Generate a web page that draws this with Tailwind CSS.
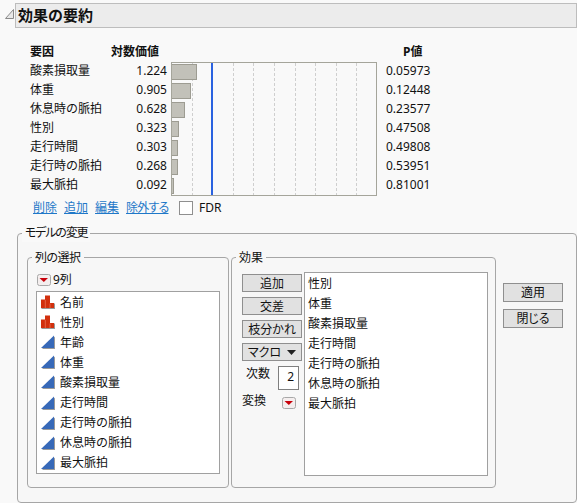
<!DOCTYPE html>
<html lang="ja">
<head>
<meta charset="utf-8">
<script src="https://cdn.jsdelivr.net/npm/@tailwindcss/browser@4"></script>
</head>
<body class="m-0">
<div class="w-[577px] h-[503px] overflow-hidden bg-[#f9f9f9] text-[#111] text-[12px] leading-[19px] font-['Noto_Sans','Noto_Sans_CJK_JP',sans-serif]">

  <!-- Title -->
  <div class="flex items-start pt-[3px] h-[42px]">
    <svg class="mt-[6px] ml-[5px] mr-[1px]" width="9" height="10" viewBox="0 0 9 10"><path d="M0.5 9.5H8.5V0.5Z" fill="#e8e8e8" stroke="#8a8a8a"/></svg>
    <div class="w-[562px] h-[25px] bg-[#ececec] border border-[#bdbdbd] pl-[2px] text-[15px] leading-[22px] font-bold">効果の要約</div>
  </div>

  <!-- Table -->
  <div class="flex">
    <div class="w-[136px] pl-[30px]">
      <div class="h-[19px] font-bold">要因</div>
      <div class="h-[19px]">酸素損取量</div>
      <div class="h-[19px]">体重</div>
      <div class="h-[19px]">休息時の脈拍</div>
      <div class="h-[19px]">性別</div>
      <div class="h-[19px]">走行時間</div>
      <div class="h-[19px]">走行時の脈拍</div>
      <div class="h-[19px]">最大脈拍</div>
    </div>
    <div class="w-[31px] flex flex-col items-end">
      <div class="h-[19px] font-bold whitespace-nowrap -mr-[-8px]">対数価値</div>
      <div class="h-[19px]">1.224</div>
      <div class="h-[19px]">0.905</div>
      <div class="h-[19px]">0.628</div>
      <div class="h-[19px]">0.323</div>
      <div class="h-[19px]">0.303</div>
      <div class="h-[19px]">0.268</div>
      <div class="h-[19px]">0.092</div>
    </div>
    <div class="ml-[4px] mt-[20px]">
      <svg class="block" width="206" height="134" viewBox="0 0 206 134">
        <g stroke="#cfcfcf" stroke-dasharray="3 2">
          <line x1="21.5" y1="1" x2="21.5" y2="133"/><line x1="62.5" y1="1" x2="62.5" y2="133"/><line x1="82.5" y1="1" x2="82.5" y2="133"/><line x1="103.5" y1="1" x2="103.5" y2="133"/><line x1="124.5" y1="1" x2="124.5" y2="133"/><line x1="144.5" y1="1" x2="144.5" y2="133"/><line x1="165.5" y1="1" x2="165.5" y2="133"/><line x1="185.5" y1="1" x2="185.5" y2="133"/>
        </g>
        <g fill="#c2c1b9" stroke="#9d9c92">
          <rect x="0.5" y="2.5" width="25" height="15"/><rect x="0.5" y="21.5" width="19" height="15"/><rect x="0.5" y="40.5" width="13" height="15"/><rect x="0.5" y="59.5" width="7" height="15"/><rect x="0.5" y="78.5" width="6" height="15"/><rect x="0.5" y="97.5" width="6" height="15"/><rect x="0.5" y="116.5" width="2" height="15"/>
        </g>
        <rect x="40" y="1" width="2" height="132" fill="#2a62e0"/>
        <rect x="0.5" y="0.5" width="205" height="133" fill="none" stroke="#a5a59b"/>
      </svg>
    </div>
    <div class="ml-[9px]">
      <div class="h-[19px] font-bold pl-[17px]">P値</div>
      <div class="h-[19px]">0.05973</div>
      <div class="h-[19px]">0.12448</div>
      <div class="h-[19px]">0.23577</div>
      <div class="h-[19px]">0.47508</div>
      <div class="h-[19px]">0.49808</div>
      <div class="h-[19px]">0.53951</div>
      <div class="h-[19px]">0.81001</div>
    </div>
  </div>

  <!-- Links -->
  <div class="flex items-center h-[19px] mt-[2px] pl-[33px]">
    <a class="text-[#1f78c8] underline">削除</a>
    <a class="text-[#1f78c8] underline ml-[7px]">追加</a>
    <a class="text-[#1f78c8] underline ml-[7px]">編集</a>
    <a class="text-[#1f78c8] underline ml-[7px] w-[42px] whitespace-nowrap tracking-[-0.8px] [font-feature-settings:'palt']">除外する</a>
    <span class="w-[14px] h-[14px] bg-white border border-[#8f8f8f] ml-[11px]"></span>
    <span class="ml-[6px]">FDR</span>
  </div>

  <!-- Model group -->
  <div class="relative ml-[17px] mt-[16px] w-[560px] h-[270px] border border-[#a6a6a6] rounded-[4px] bg-[#f7f7f7] pl-[9px] pt-[23px] flex items-start">
    <span class="absolute left-[4px] -top-[11px] px-[3px] bg-[#f9f9f9] text-[12px] tracking-[-1.2px] [font-feature-settings:'palt']">モデルの変更</span>

    <!-- Column selection -->
    <div class="relative w-[202px] h-[231px] border border-[#a6a6a6] rounded-[4px] pl-[8px]">
      <span class="absolute left-[4px] -top-[10px] px-[3px] bg-[#f7f7f7] tracking-[-0.5px] [font-feature-settings:'palt']">列の選択</span>
      <div class="flex items-center h-[19px] mt-[12px] ml-[1px]">
        <svg width="14" height="12" viewBox="0 0 14 12"><rect x="0.5" y="0.5" width="13" height="11" rx="2" fill="#f4eeee" stroke="#a8a8a8"/><path d="M2.5 4H11L6.8 8Z" fill="#c8000a"/></svg>
        <span class="ml-[2px]">9列</span>
      </div>
      <div class="w-[184px] h-[183px] mt-[2px] bg-white border border-[#a0a0a0] pl-[4px]">
        <div class="flex items-center h-[20.1px]"><svg class="shrink-0" width="14" height="14" viewBox="0 0 14 14"><path d="M0 4.500H4V0.500H9V8H13V13H0Z" fill="#d2300e"/><path d="M4.300 5V13M9 8.500V13" stroke="#ee8a70" stroke-width="0.6"/><path d="M13 8.500H14V14H0.500V13H13Z" fill="#9a9a9a"/></svg><span class="ml-[5px]">名前</span></div>
        <div class="flex items-center h-[20.1px]"><svg class="shrink-0" width="14" height="14" viewBox="0 0 14 14"><path d="M0 4.500H4V0.500H9V8H13V13H0Z" fill="#d2300e"/><path d="M4.300 5V13M9 8.500V13" stroke="#ee8a70" stroke-width="0.6"/><path d="M13 8.500H14V14H0.500V13H13Z" fill="#9a9a9a"/></svg><span class="ml-[5px]">性別</span></div>
        <div class="flex items-center h-[20.1px]"><svg class="shrink-0" width="14" height="14" viewBox="0 0 14 14"><path d="M1 14H14V1.500Z" fill="#9a9a9a"/><path d="M0 13H13V0.500Z" fill="#3769b8"/></svg><span class="ml-[5px]">年齢</span></div>
        <div class="flex items-center h-[20.1px]"><svg class="shrink-0" width="14" height="14" viewBox="0 0 14 14"><path d="M1 14H14V1.500Z" fill="#9a9a9a"/><path d="M0 13H13V0.500Z" fill="#3769b8"/></svg><span class="ml-[5px]">体重</span></div>
        <div class="flex items-center h-[20.1px]"><svg class="shrink-0" width="14" height="14" viewBox="0 0 14 14"><path d="M1 14H14V1.500Z" fill="#9a9a9a"/><path d="M0 13H13V0.500Z" fill="#3769b8"/></svg><span class="ml-[5px]">酸素損取量</span></div>
        <div class="flex items-center h-[20.1px]"><svg class="shrink-0" width="14" height="14" viewBox="0 0 14 14"><path d="M1 14H14V1.500Z" fill="#9a9a9a"/><path d="M0 13H13V0.500Z" fill="#3769b8"/></svg><span class="ml-[5px]">走行時間</span></div>
        <div class="flex items-center h-[20.1px]"><svg class="shrink-0" width="14" height="14" viewBox="0 0 14 14"><path d="M1 14H14V1.500Z" fill="#9a9a9a"/><path d="M0 13H13V0.500Z" fill="#3769b8"/></svg><span class="ml-[5px]">走行時の脈拍</span></div>
        <div class="flex items-center h-[20.1px]"><svg class="shrink-0" width="14" height="14" viewBox="0 0 14 14"><path d="M1 14H14V1.500Z" fill="#9a9a9a"/><path d="M0 13H13V0.500Z" fill="#3769b8"/></svg><span class="ml-[5px]">休息時の脈拍</span></div>
        <div class="flex items-center h-[20.1px]"><svg class="shrink-0" width="14" height="14" viewBox="0 0 14 14"><path d="M1 14H14V1.500Z" fill="#9a9a9a"/><path d="M0 13H13V0.500Z" fill="#3769b8"/></svg><span class="ml-[5px]">最大脈拍</span></div>
      </div>
    </div>

    <!-- Effects -->
    <div class="relative ml-[2px] w-[265px] h-[231px] border border-[#a6a6a6] rounded-[4px] flex">
      <span class="absolute left-[4px] -top-[10px] px-[3px] bg-[#f7f7f7]">効果</span>
      <div class="w-[72px] pl-[10px] pt-[16px] flex flex-col gap-[5px]">
        <div class="w-[60px] h-[18px] bg-[#e1e1e1] border border-[#8f8f8f] flex items-center justify-center">追加</div>
        <div class="w-[60px] h-[18px] bg-[#e1e1e1] border border-[#8f8f8f] flex items-center justify-center">交差</div>
        <div class="w-[60px] h-[18px] bg-[#e1e1e1] border border-[#8f8f8f] flex items-center justify-center [font-feature-settings:'palt']">枝分かれ</div>
        <div class="w-[60px] h-[18px] bg-[#e1e1e1] border border-[#8f8f8f] flex items-center justify-center gap-[6px] [font-feature-settings:'palt']">マクロ<svg width="9" height="5" viewBox="0 0 9 5"><path d="M0 0H9L4.500 5Z" fill="#222"/></svg></div>
        <div class="flex pl-[4px]">
          <span class="-mt-[2px]">次数</span>
          <span class="ml-[8px] w-[21px] h-[24px] bg-white border border-[#7f7f7f] text-right pr-[4px]">2</span>
        </div>
        <div class="flex items-center">
          <span class="-mt-[4px]">変換</span>
          <svg class="ml-[16px]" width="14" height="12" viewBox="0 0 14 12"><rect x="0.5" y="0.5" width="13" height="11" rx="2" fill="#f4eeee" stroke="#a8a8a8"/><path d="M2.5 4H11L6.8 8Z" fill="#c8000a"/></svg>
        </div>
      </div>
      <div class="w-[184px] h-[204px] mt-[14px] bg-white border border-[#a0a0a0] pl-[3px] pt-[1px]">
        <div class="h-[20px] leading-[20px]">性別</div>
        <div class="h-[20px] leading-[20px]">体重</div>
        <div class="h-[20px] leading-[20px]">酸素損取量</div>
        <div class="h-[20px] leading-[20px]">走行時間</div>
        <div class="h-[20px] leading-[20px]">走行時の脈拍</div>
        <div class="h-[20px] leading-[20px]">休息時の脈拍</div>
        <div class="h-[20px] leading-[20px]">最大脈拍</div>
      </div>
    </div>

    <!-- Action buttons -->
    <div class="ml-[7px] mt-[26px] flex flex-col gap-[7px]">
      <div class="w-[60px] h-[19px] bg-[#e1e1e1] border border-[#8f8f8f] flex items-center justify-center">適用</div>
      <div class="w-[60px] h-[19px] bg-[#e1e1e1] border border-[#8f8f8f] flex items-center justify-center [font-feature-settings:'palt']">閉じる</div>
    </div>
  </div>
</div>
</body>
</html>
